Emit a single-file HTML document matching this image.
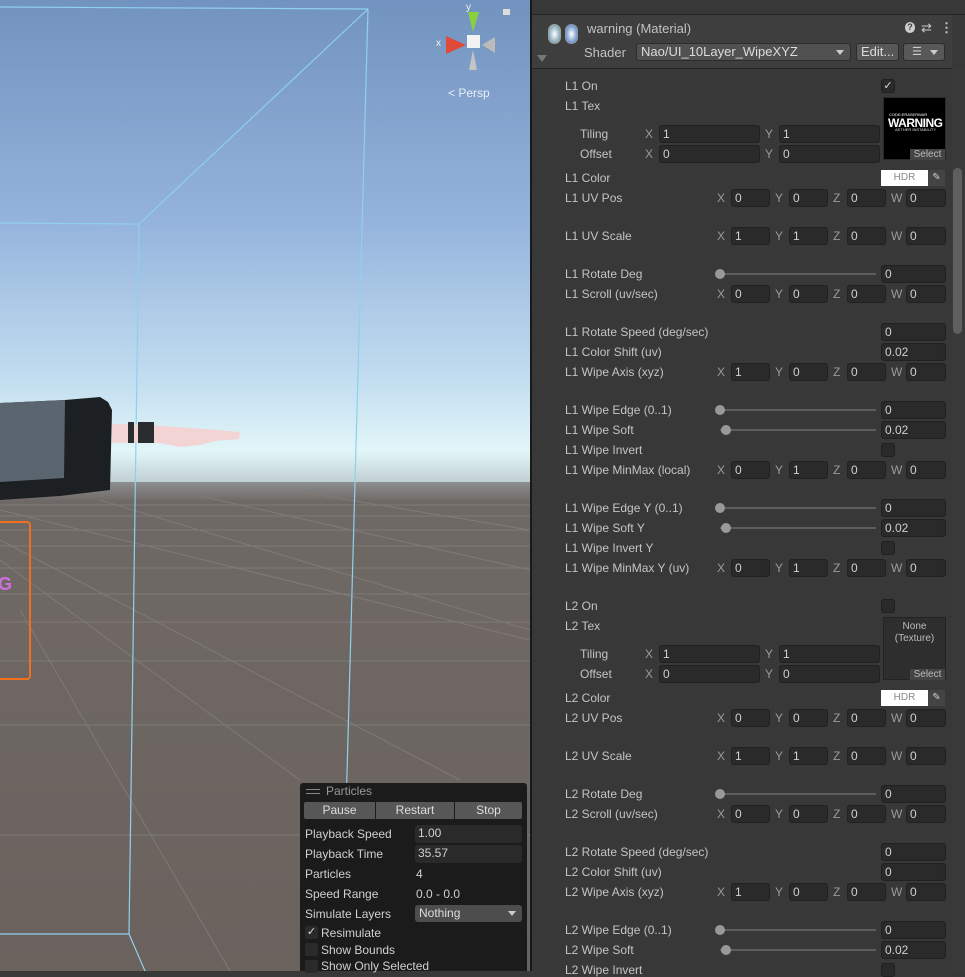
<!DOCTYPE html>
<html><head><meta charset="utf-8"><style>
*{margin:0;padding:0;box-sizing:border-box}
body{width:965px;height:971px;overflow:hidden;background:#383838;font-family:"Liberation Sans",sans-serif;font-size:12px;position:relative}
.a{position:absolute}
.l{position:absolute;left:565px;color:#c4c4c4;font-size:12px;line-height:14px}
.x{position:absolute;color:#9a9a9a;font-size:12px;line-height:14px}
.f{position:absolute;height:18px;background:#2a2a2a;border:1px solid #212121;border-radius:3px;color:#d0d0d0;font-size:12px;line-height:16px;padding-left:3px}
.cb{position:absolute;left:881px;width:14px;height:14px;background:#2a2a2a;border:1px solid #202020;border-radius:3px}
.tr{position:absolute;left:720px;width:156px;height:2px;background:#5e5e5e}
.kn{position:absolute;width:10px;height:10px;border-radius:5px;background:#999}
.pl{position:absolute;left:305px;color:#d0d0d0;font-size:12px;line-height:14px}
.pf{position:absolute;left:415px;width:107px;height:18px;background:#2a2a2a;border-radius:3px;color:#d0d0d0;line-height:17px;padding-left:3px}
</style></head><body>
<svg class="a" style="left:0;top:0" width="530" height="971">
<defs>
<linearGradient id="sky" x1="0" y1="0" x2="0" y2="1">
<stop offset="0" stop-color="#7293bf"/><stop offset="0.45" stop-color="#94b3dc"/><stop offset="0.78" stop-color="#c3def0"/><stop offset="0.92" stop-color="#e2f6f8"/><stop offset="1" stop-color="#b8c6c8"/></linearGradient>
<linearGradient id="gr" x1="0" y1="0" x2="0" y2="1"><stop offset="0" stop-color="#8c8f90"/><stop offset="0.04" stop-color="#6f6966"/><stop offset="1" stop-color="#6a625d"/></linearGradient>
</defs>
<rect width="530" height="490" fill="url(#sky)"/>
<rect y="482" width="530" height="489" fill="url(#gr)"/>
<g stroke="#827d7a" stroke-width="1" fill="none" opacity="0.9">
<line x1="0" y1="505" x2="530" y2="505"/><line x1="0" y1="516" x2="530" y2="516"/><line x1="0" y1="530" x2="530" y2="530"/>
<line x1="0" y1="546" x2="530" y2="546"/><line x1="0" y1="568" x2="530" y2="568"/><line x1="0" y1="594" x2="530" y2="594"/>
<line x1="0" y1="622" x2="530" y2="622"/><line x1="0" y1="661" x2="530" y2="661"/><line x1="0" y1="725" x2="530" y2="725"/>
<line x1="0" y1="835" x2="530" y2="835"/>
<line x1="0" y1="510" x2="530" y2="640"/><line x1="0" y1="540" x2="460" y2="780"/><line x1="0" y1="560" x2="300" y2="780"/>
<line x1="100" y1="500" x2="530" y2="630"/><line x1="200" y1="496" x2="530" y2="570"/><line x1="300" y1="492" x2="530" y2="530"/>
<line x1="20" y1="610" x2="230" y2="971"/>
</g>
<g stroke="#8fd0ee" stroke-width="1.2" fill="none">
<line x1="0" y1="7" x2="368" y2="9"/><line x1="368" y1="9" x2="139" y2="224"/><line x1="0" y1="223" x2="139" y2="224"/>
<line x1="139" y1="224" x2="129" y2="934"/><line x1="368" y1="9" x2="346" y2="810"/>
<line x1="129" y1="934" x2="0" y2="934"/><line x1="129" y1="934" x2="145" y2="971"/>
</g>
<path d="M0 403 L65 400 L100 397 L108 402 L112 410 L110 490 L60 496 L0 500 Z" fill="#1d2023"/>
<path d="M0 403 L65 400 L64 478 L0 482 Z" fill="#5a6570"/>
<path d="M112 424 L150 425 L175 427 L205 429 L240 432 L239 439 L215 441 L200 445 L180 447 L160 443 L140 442 L112 443 Z" fill="#f2d4d4"/>
<rect x="128" y="422" width="6" height="21" fill="#2a2d30"/><rect x="138" y="422" width="16" height="21" fill="#2a2d30"/>
<rect x="-4" y="522" width="34" height="157" rx="3" fill="none" stroke="#f07020" stroke-width="2"/>
<text x="-2" y="590" font-size="18" font-weight="bold" fill="#d070e0" font-family="Liberation Sans">G</text>
<rect x="467" y="35" width="13" height="13" fill="#f2f2f2"/>
<path d="M468 12 L479 12 L473 32 Z" fill="#88d040"/>
<path d="M446 36 L446 54 L466 45Z" fill="#e04a38"/>
<path d="M495 37 L495 53 L482 45 Z" fill="#bbb"/>
<path d="M473 50 L469 70 L477 70 Z" fill="#c4c4c4"/>
<text x="466" y="10" font-size="10" fill="#f0f0f0" font-family="Liberation Sans">y</text>
<text x="436" y="46" font-size="10" fill="#f0f0f0" font-family="Liberation Sans">x</text>
<rect x="503" y="9" width="7" height="6" fill="#ddd"/>
<text x="448" y="97" font-size="12" fill="#e8eef6" font-family="Liberation Sans">&lt; Persp</text>
</svg>
<div class="a" style="left:530px;top:0;width:2px;height:971px;background:#191919"></div>
<div class="a" style="left:532px;top:0;width:433px;height:15px;background:#383838;border-bottom:1px solid #232323"></div>
<div class="a" style="left:532px;top:15px;width:420px;height:54px;background:#3e3e3e;border-bottom:1px solid #242424"></div>
<div class="a" style="left:548px;top:24px;width:13px;height:20px;border-radius:7px;background:radial-gradient(#fff,#8ab 60%,#c84)"></div>
<div class="a" style="left:565px;top:24px;width:13px;height:20px;border-radius:7px;background:radial-gradient(#fff,#79c 60%,#c95)"></div>
<div class="a" style="left:537px;top:55px;width:0;height:0;border-left:5px solid transparent;border-right:5px solid transparent;border-top:7px solid #777"></div>
<div class="a" style="left:587px;top:21px;color:#c2c2c2;font-size:13px">warning (Material)</div>
<div class="a" style="left:905px;top:22px;width:10px;height:11px;border-radius:5px;background:#ccc;color:#3e3e3e;font-size:9px;line-height:11px;text-align:center;font-weight:bold">?</div>
<div class="a" style="left:921px;top:20px;color:#ccc;font-size:13px">⇄</div>
<div class="a" style="left:940px;top:20px;color:#ccc;font-size:13px;font-weight:bold">⋮</div>
<div class="a" style="left:584px;top:45px;color:#c2c2c2;font-size:13px">Shader</div>
<div class="a" style="left:636px;top:43px;width:215px;height:18px;background:#515151;border:1px solid #2c2c2c;border-radius:3px;color:#dcdcdc;font-size:13px;line-height:16px;padding-left:4px">Nao/UI_10Layer_WipeXYZ<span class="a" style="right:6px;top:6px;border-left:4px solid transparent;border-right:4px solid transparent;border-top:5px solid #ccc"></span></div>
<div class="a" style="left:856px;top:43px;width:43px;height:18px;background:#585858;border:1px solid #2c2c2c;border-radius:3px;color:#dcdcdc;font-size:13px;line-height:16px;padding-left:4px">Edit...</div>
<div class="a" style="left:903px;top:43px;width:42px;height:18px;background:#585858;border:1px solid #2c2c2c;border-radius:3px;color:#ccc;font-size:11px;line-height:16px;padding-left:8px">☰ <span class="a" style="right:6px;top:6px;border-left:4px solid transparent;border-right:4px solid transparent;border-top:5px solid #ccc"></span></div>
<div class="a" style="left:952px;top:69px;width:13px;height:902px;background:#3a3a3a"></div>
<div class="a" style="left:953px;top:168px;width:9px;height:166px;border-radius:5px;background:#5f5f5f"></div>

<div class="l" style="top:79px">L1 On</div><div class="cb" style="top:79px;color:#ddd;font-size:11px;line-height:12px;text-align:center">✓</div>
<div class="l" style="top:99px">L1 Tex</div>
<div class="a" style="left:883px;top:97px;width:63px;height:63px;background:#000;border:1px solid #2a2a2a"></div>
<div class="a" style="left:889px;top:112px;color:#fff;font-size:4px">CODE:ERASERWAR</div>
<div class="a" style="left:888px;top:116px;color:#fff;font-size:12px;font-weight:bold;letter-spacing:-0.5px">WARNING</div>
<div class="a" style="left:895px;top:127px;color:#ddd;font-size:4px">AETHER INSTABILITY</div>
<div class="a" style="left:910px;top:149px;width:35px;height:11px;background:#444;color:#bbb;font-size:10px;line-height:11px;text-align:center">Select</div>
<div class="l" style="left:580px;top:127px">Tiling</div><div class="x" style="left:645px;top:127px">X</div><div class="f" style="left:659px;top:125px;width:101px">1</div><div class="x" style="left:765px;top:127px">Y</div><div class="f" style="left:779px;top:125px;width:101px">1</div>
<div class="l" style="left:580px;top:147px">Offset</div><div class="x" style="left:645px;top:147px">X</div><div class="f" style="left:659px;top:145px;width:101px">0</div><div class="x" style="left:765px;top:147px">Y</div><div class="f" style="left:779px;top:145px;width:101px">0</div>
<div class="l" style="top:171px">L1 Color</div>
<div class="a" style="left:881px;top:170px;width:47px;height:16px;background:#fff;color:#888;font-size:10px;line-height:16px;text-align:center">HDR</div>
<div class="a" style="left:928px;top:170px;width:17px;height:16px;background:#444;color:#ccc;font-size:10px;line-height:16px;text-align:center">✎</div>

<div class="l" style="top:191px">L1 UV Pos</div>
<div class="x" style="left:717px;top:191px">X</div><div class="f" style="left:731px;top:189px;width:39px">0</div><div class="x" style="left:775px;top:191px">Y</div><div class="f" style="left:789px;top:189px;width:39px">0</div><div class="x" style="left:833px;top:191px">Z</div><div class="f" style="left:847px;top:189px;width:39px">0</div><div class="x" style="left:891px;top:191px">W</div><div class="f" style="left:906px;top:189px;width:40px">0</div>
<div class="l" style="top:229px">L1 UV Scale</div>
<div class="x" style="left:717px;top:229px">X</div><div class="f" style="left:731px;top:227px;width:39px">1</div><div class="x" style="left:775px;top:229px">Y</div><div class="f" style="left:789px;top:227px;width:39px">1</div><div class="x" style="left:833px;top:229px">Z</div><div class="f" style="left:847px;top:227px;width:39px">0</div><div class="x" style="left:891px;top:229px">W</div><div class="f" style="left:906px;top:227px;width:40px">0</div>
<div class="l" style="top:267px">L1 Rotate Deg</div><div class="tr" style="top:273px"></div><div class="kn" style="left:715px;top:269px"></div><div class="f" style="left:881px;top:265px;width:65px">0</div>
<div class="l" style="top:287px">L1 Scroll (uv/sec)</div>
<div class="x" style="left:717px;top:287px">X</div><div class="f" style="left:731px;top:285px;width:39px">0</div><div class="x" style="left:775px;top:287px">Y</div><div class="f" style="left:789px;top:285px;width:39px">0</div><div class="x" style="left:833px;top:287px">Z</div><div class="f" style="left:847px;top:285px;width:39px">0</div><div class="x" style="left:891px;top:287px">W</div><div class="f" style="left:906px;top:285px;width:40px">0</div>
<div class="l" style="top:325px">L1 Rotate Speed (deg/sec)</div><div class="f" style="left:881px;top:323px;width:65px">0</div>
<div class="l" style="top:345px">L1 Color Shift (uv)</div><div class="f" style="left:881px;top:343px;width:65px">0.02</div>
<div class="l" style="top:365px">L1 Wipe Axis (xyz)</div>
<div class="x" style="left:717px;top:365px">X</div><div class="f" style="left:731px;top:363px;width:39px">1</div><div class="x" style="left:775px;top:365px">Y</div><div class="f" style="left:789px;top:363px;width:39px">0</div><div class="x" style="left:833px;top:365px">Z</div><div class="f" style="left:847px;top:363px;width:39px">0</div><div class="x" style="left:891px;top:365px">W</div><div class="f" style="left:906px;top:363px;width:40px">0</div>
<div class="l" style="top:403px">L1 Wipe Edge (0..1)</div><div class="tr" style="top:409px"></div><div class="kn" style="left:715px;top:405px"></div><div class="f" style="left:881px;top:401px;width:65px">0</div>
<div class="l" style="top:423px">L1 Wipe Soft</div><div class="tr" style="top:429px"></div><div class="kn" style="left:721px;top:425px"></div><div class="f" style="left:881px;top:421px;width:65px">0.02</div>
<div class="l" style="top:443px">L1 Wipe Invert</div><div class="cb" style="top:443px"></div>
<div class="l" style="top:463px">L1 Wipe MinMax (local)</div>
<div class="x" style="left:717px;top:463px">X</div><div class="f" style="left:731px;top:461px;width:39px">0</div><div class="x" style="left:775px;top:463px">Y</div><div class="f" style="left:789px;top:461px;width:39px">1</div><div class="x" style="left:833px;top:463px">Z</div><div class="f" style="left:847px;top:461px;width:39px">0</div><div class="x" style="left:891px;top:463px">W</div><div class="f" style="left:906px;top:461px;width:40px">0</div>
<div class="l" style="top:501px">L1 Wipe Edge Y (0..1)</div><div class="tr" style="top:507px"></div><div class="kn" style="left:715px;top:503px"></div><div class="f" style="left:881px;top:499px;width:65px">0</div>
<div class="l" style="top:521px">L1 Wipe Soft Y</div><div class="tr" style="top:527px"></div><div class="kn" style="left:721px;top:523px"></div><div class="f" style="left:881px;top:519px;width:65px">0.02</div>
<div class="l" style="top:541px">L1 Wipe Invert Y</div><div class="cb" style="top:541px"></div>
<div class="l" style="top:561px">L1 Wipe MinMax Y (uv)</div>
<div class="x" style="left:717px;top:561px">X</div><div class="f" style="left:731px;top:559px;width:39px">0</div><div class="x" style="left:775px;top:561px">Y</div><div class="f" style="left:789px;top:559px;width:39px">1</div><div class="x" style="left:833px;top:561px">Z</div><div class="f" style="left:847px;top:559px;width:39px">0</div><div class="x" style="left:891px;top:561px">W</div><div class="f" style="left:906px;top:559px;width:40px">0</div>

<div class="l" style="top:599px">L2 On</div><div class="cb" style="top:599px"></div>
<div class="l" style="top:619px">L2 Tex</div>
<div class="a" style="left:883px;top:617px;width:63px;height:63px;background:#2e2e2e;border:1px solid #232323;color:#bbb;font-size:10px;text-align:center;line-height:12px;padding-top:3px">None<br>(Texture)</div>
<div class="a" style="left:910px;top:669px;width:35px;height:11px;background:#444;color:#bbb;font-size:10px;line-height:11px;text-align:center">Select</div>
<div class="l" style="left:580px;top:647px">Tiling</div><div class="x" style="left:645px;top:647px">X</div><div class="f" style="left:659px;top:645px;width:101px">1</div><div class="x" style="left:765px;top:647px">Y</div><div class="f" style="left:779px;top:645px;width:101px">1</div>
<div class="l" style="left:580px;top:667px">Offset</div><div class="x" style="left:645px;top:667px">X</div><div class="f" style="left:659px;top:665px;width:101px">0</div><div class="x" style="left:765px;top:667px">Y</div><div class="f" style="left:779px;top:665px;width:101px">0</div>
<div class="l" style="top:691px">L2 Color</div>
<div class="a" style="left:881px;top:690px;width:47px;height:16px;background:#fff;color:#888;font-size:10px;line-height:16px;text-align:center">HDR</div>
<div class="a" style="left:928px;top:690px;width:17px;height:16px;background:#444;color:#ccc;font-size:10px;line-height:16px;text-align:center">✎</div>
<div class="l" style="top:711px">L2 UV Pos</div>
<div class="x" style="left:717px;top:711px">X</div><div class="f" style="left:731px;top:709px;width:39px">0</div><div class="x" style="left:775px;top:711px">Y</div><div class="f" style="left:789px;top:709px;width:39px">0</div><div class="x" style="left:833px;top:711px">Z</div><div class="f" style="left:847px;top:709px;width:39px">0</div><div class="x" style="left:891px;top:711px">W</div><div class="f" style="left:906px;top:709px;width:40px">0</div>
<div class="l" style="top:749px">L2 UV Scale</div>
<div class="x" style="left:717px;top:749px">X</div><div class="f" style="left:731px;top:747px;width:39px">1</div><div class="x" style="left:775px;top:749px">Y</div><div class="f" style="left:789px;top:747px;width:39px">1</div><div class="x" style="left:833px;top:749px">Z</div><div class="f" style="left:847px;top:747px;width:39px">0</div><div class="x" style="left:891px;top:749px">W</div><div class="f" style="left:906px;top:747px;width:40px">0</div>
<div class="l" style="top:787px">L2 Rotate Deg</div><div class="tr" style="top:793px"></div><div class="kn" style="left:715px;top:789px"></div><div class="f" style="left:881px;top:785px;width:65px">0</div>
<div class="l" style="top:807px">L2 Scroll (uv/sec)</div>
<div class="x" style="left:717px;top:807px">X</div><div class="f" style="left:731px;top:805px;width:39px">0</div><div class="x" style="left:775px;top:807px">Y</div><div class="f" style="left:789px;top:805px;width:39px">0</div><div class="x" style="left:833px;top:807px">Z</div><div class="f" style="left:847px;top:805px;width:39px">0</div><div class="x" style="left:891px;top:807px">W</div><div class="f" style="left:906px;top:805px;width:40px">0</div>
<div class="l" style="top:845px">L2 Rotate Speed (deg/sec)</div><div class="f" style="left:881px;top:843px;width:65px">0</div>
<div class="l" style="top:865px">L2 Color Shift (uv)</div><div class="f" style="left:881px;top:863px;width:65px">0</div>
<div class="l" style="top:885px">L2 Wipe Axis (xyz)</div>
<div class="x" style="left:717px;top:885px">X</div><div class="f" style="left:731px;top:883px;width:39px">1</div><div class="x" style="left:775px;top:885px">Y</div><div class="f" style="left:789px;top:883px;width:39px">0</div><div class="x" style="left:833px;top:885px">Z</div><div class="f" style="left:847px;top:883px;width:39px">0</div><div class="x" style="left:891px;top:885px">W</div><div class="f" style="left:906px;top:883px;width:40px">0</div>
<div class="l" style="top:923px">L2 Wipe Edge (0..1)</div><div class="tr" style="top:929px"></div><div class="kn" style="left:715px;top:925px"></div><div class="f" style="left:881px;top:921px;width:65px">0</div>
<div class="l" style="top:943px">L2 Wipe Soft</div><div class="tr" style="top:949px"></div><div class="kn" style="left:721px;top:945px"></div><div class="f" style="left:881px;top:941px;width:65px">0.02</div>
<div class="l" style="top:963px">L2 Wipe Invert</div><div class="cb" style="top:963px"></div>

<div class="a" style="left:300px;top:783px;width:227px;height:188px;background:#1b1b1b;border-radius:3px 3px 0 0"></div>
<div class="a" style="left:306px;top:789px;width:14px;height:1px;background:#888"></div><div class="a" style="left:306px;top:793px;width:14px;height:1px;background:#888"></div>
<div class="a" style="left:326px;top:784px;color:#999;font-size:12px">Particles</div>
<div class="a" style="left:304px;top:802px;width:71px;height:17px;background:#575757;color:#ddd;font-size:12px;line-height:17px;text-align:center;border-radius:2px 0 0 2px">Pause</div>
<div class="a" style="left:376px;top:802px;width:78px;height:17px;background:#575757;color:#ddd;font-size:12px;line-height:17px;text-align:center">Restart</div>
<div class="a" style="left:455px;top:802px;width:67px;height:17px;background:#575757;color:#ddd;font-size:12px;line-height:17px;text-align:center;border-radius:0 2px 2px 0">Stop</div>
<div class="pl" style="top:827px">Playback Speed</div><div class="pf" style="top:825px">1.00</div>
<div class="pl" style="top:847px">Playback Time</div><div class="pf" style="top:845px">35.57</div>
<div class="pl" style="top:867px">Particles</div><div class="a" style="left:416px;top:867px;color:#d0d0d0">4</div>
<div class="pl" style="top:887px">Speed Range</div><div class="a" style="left:416px;top:887px;color:#d0d0d0">0.0 - 0.0</div>
<div class="pl" style="top:907px">Simulate Layers</div><div class="a" style="left:415px;top:905px;width:107px;height:17px;background:#4d4d4d;border-radius:3px;color:#ddd;line-height:16px;padding-left:4px">Nothing<span class="a" style="right:6px;top:6px;border-left:4px solid transparent;border-right:4px solid transparent;border-top:5px solid #ccc"></span></div>
<div class="a" style="left:305px;top:926px;width:13px;height:13px;background:#2a2a2a;border-radius:2px;color:#ddd;font-size:11px;line-height:13px;text-align:center">✓</div><div class="pl" style="left:321px;top:926px">Resimulate</div>
<div class="a" style="left:305px;top:943px;width:13px;height:13px;background:#2a2a2a;border-radius:2px"></div><div class="pl" style="left:321px;top:943px">Show Bounds</div>
<div class="a" style="left:305px;top:960px;width:13px;height:13px;background:#2a2a2a;border-radius:2px"></div><div class="pl" style="left:321px;top:959px">Show Only Selected</div>
</body></html>
